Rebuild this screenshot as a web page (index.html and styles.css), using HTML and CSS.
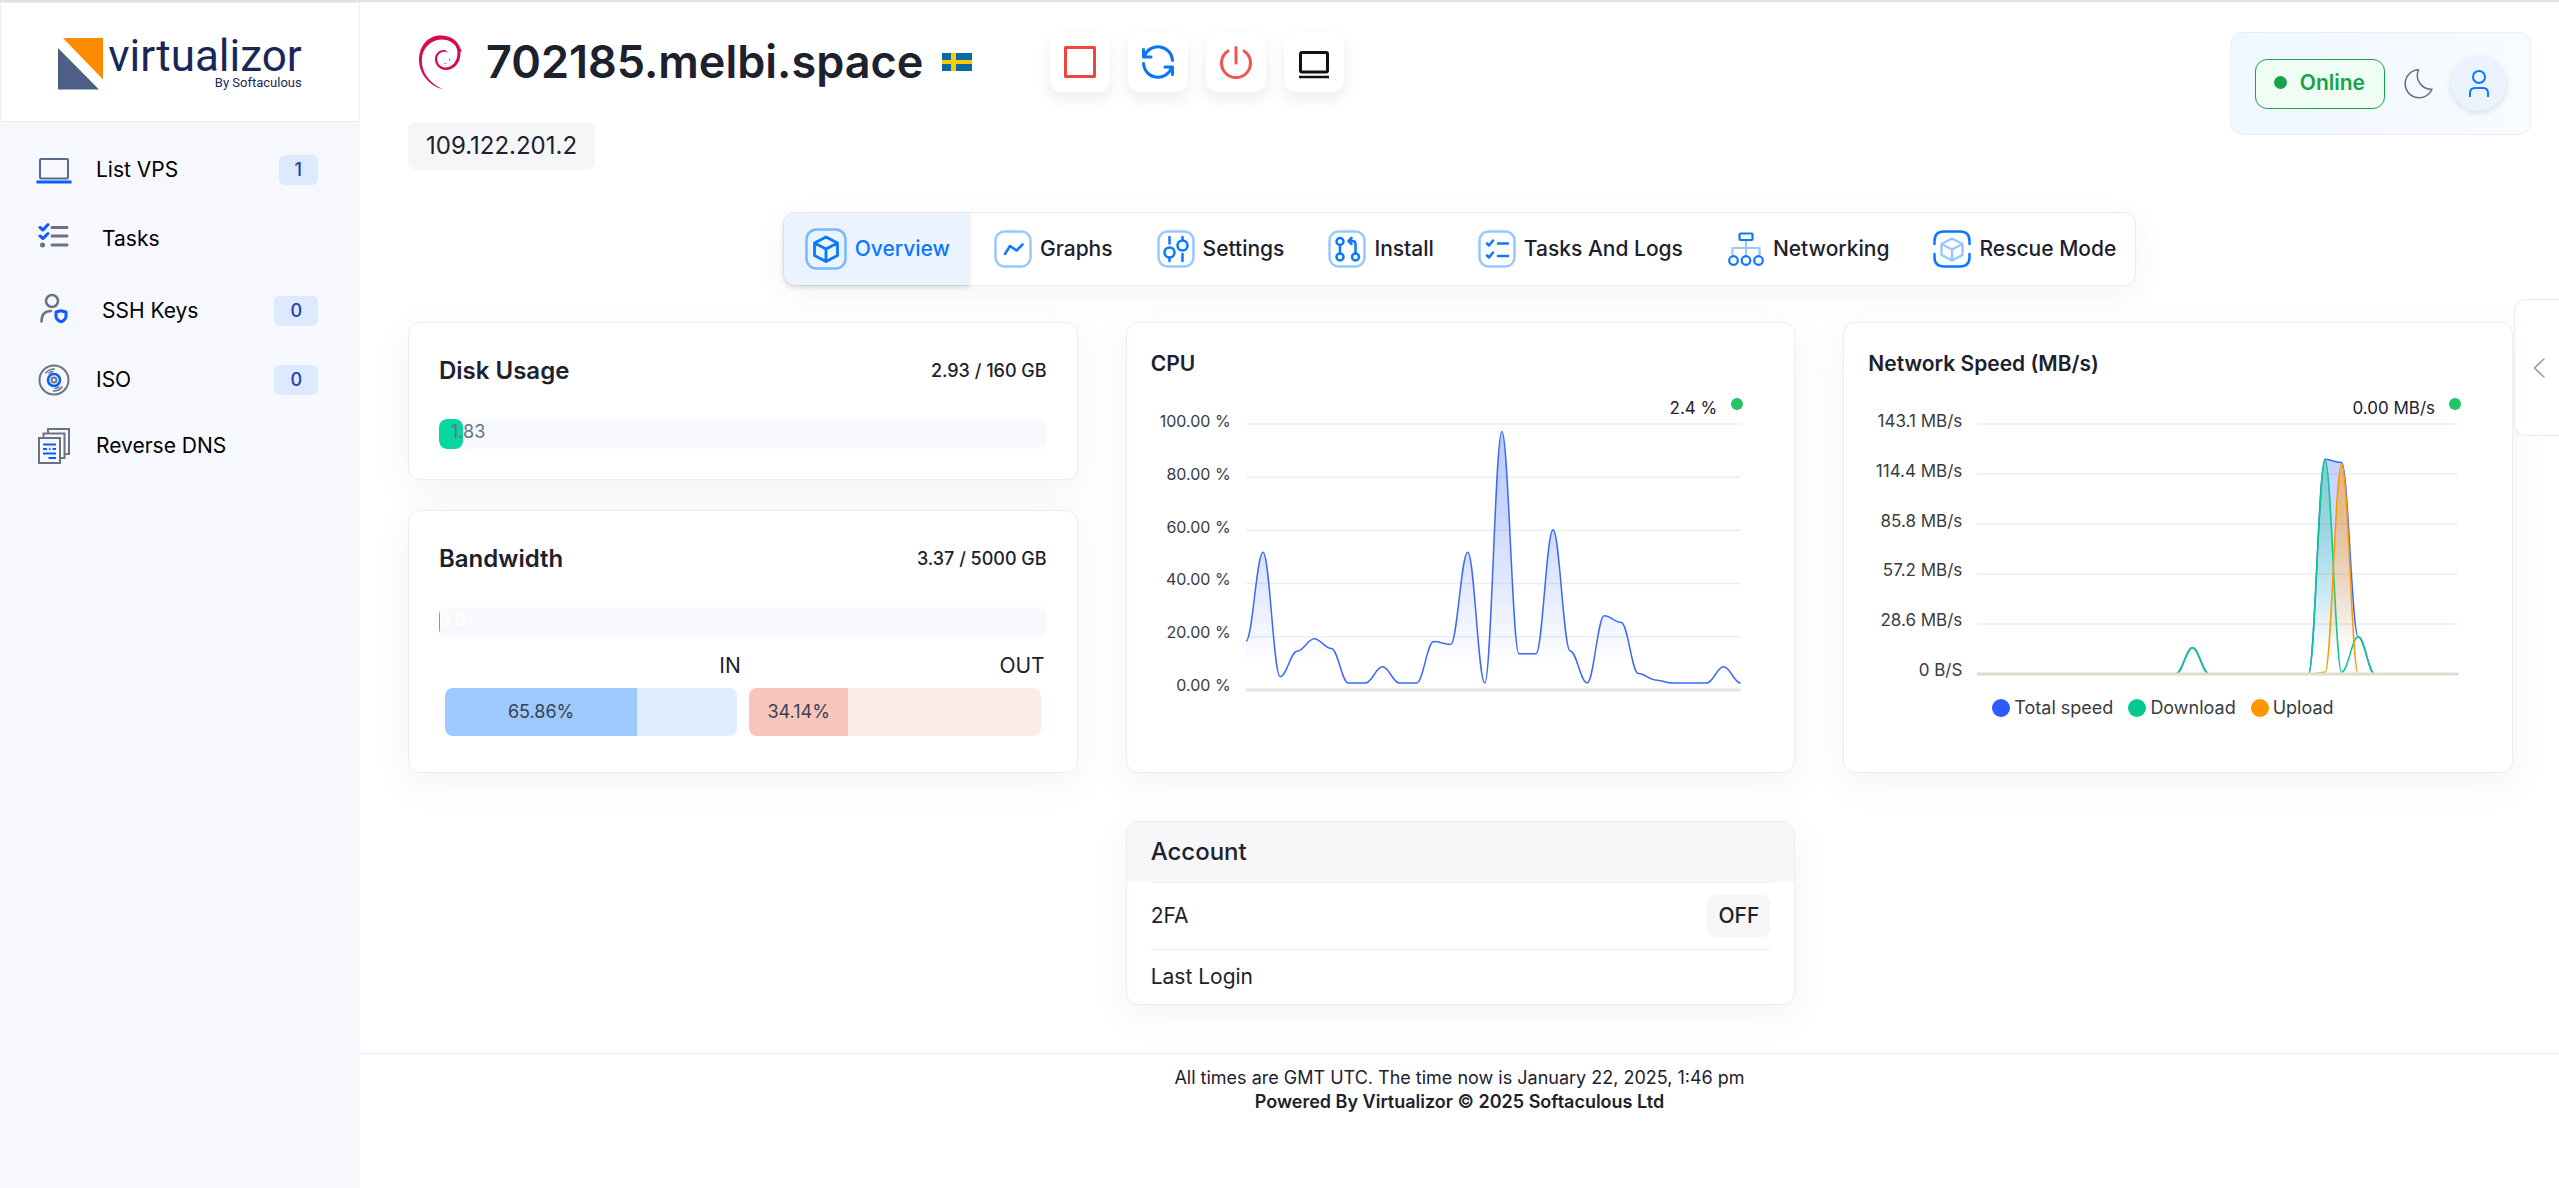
FILE: index.html
```html
<!DOCTYPE html>
<html lang="en">
<head>
  <meta charset="UTF-8">
  <title>Virtualizor - 702185.melbi.space</title>
  <link rel="stylesheet" href="styles.css">
</head>
<body>
  <div class="page">
    <aside class="sidebar">
      <a href="#" class="logo">
        <svg width="46" height="52" viewBox="0 0 46 52">
          <path d="M5 0H45V41.500Z" fill="#fd8b00"/>
          <path d="M0 10V51.500H41Z" fill="#4d5f84"/>
        </svg>
        <span class="logo-text">
          <span class="logo-name">virtualizor</span>
          <span class="logo-by">By Softaculous</span>
        </span>
      </a>
      <nav class="menu">
        <a href="#">
          <svg width="36" height="36" viewBox="0 0 36 36" fill="none">
            <rect x="4" y="7" width="28" height="19.500" rx="1" stroke="#5a6990" stroke-width="2"/>
            <path d="M.5 30H35.500" stroke="#0a5cff" stroke-width="3"/>
          </svg>
          <span>List VPS</span>
          <span class="badge">1</span>
        </a>
        <a href="#" class="wide">
          <svg width="36" height="38" viewBox="0 0 36 38" fill="none" stroke-width="3" stroke-linecap="round" stroke-linejoin="round">
            <path d="M16 7.500H31M16 16H31M16 25H31" stroke="#6b7286"/>
            <path d="M4 7.500L7 10L12 4.500M4 16L7 18.500L12 13.500" stroke="#0a5cff"/>
            <circle cx="6.500" cy="25" r="2.500" fill="#6b7286"/>
          </svg>
          <span>Tasks</span>
        </a>
        <a href="#" class="wide">
          <svg width="36" height="42" viewBox="0 0 36 42" fill="none" stroke-width="2.500" stroke-linecap="round" stroke-linejoin="round">
            <circle cx="16" cy="11" r="6" stroke="#6b7286"/>
            <path d="M5.500 31.500C5.500 24.500 9 21 15 21" stroke="#6b7286"/>
            <path d="M25 20.700L30 22V26C30 29.500 28 30.800 25 31.800C22 30.800 20 29.500 20 26V22Z" stroke="#0a5cff" stroke-width="3"/>
          </svg>
          <span>SSH Keys</span>
          <span class="badge">0</span>
        </a>
        <a href="#">
          <svg width="36" height="32" viewBox="0 0 36 32" fill="none" stroke="#6b7286" stroke-width="2">
            <circle cx="18" cy="16" r="14.500"/>
            <circle cx="18" cy="16" r="6" stroke="#0a5cff" stroke-width="2.500"/>
            <circle cx="18" cy="16" r="2.500"/>
            <path d="M9.500 9.500Q12.500 5 19 5M12.500 9.500Q14.500 7.500 17.500 7.500M26.500 22.500Q23.500 27 17 27M23.500 22.500Q21.500 24.500 18.500 24.500" stroke-width="1.500"/>
          </svg>
          <span>ISO</span>
          <span class="badge">0</span>
        </a>
        <a href="#">
          <svg width="36" height="36" viewBox="0 0 36 36" fill="none" stroke="#6b7286" stroke-width="2">
            <path d="M12 5V1H33V26H29.500M7.500 9.500V5.500H28.500V30H25"/>
            <rect x="3" y="10" width="21" height="25"/>
            <path d="M7 16.500H20M7 21H11M13 21H14.500M16.500 21H20M7 25.500H20M12.500 30H20" stroke="#0a5cff"/>
          </svg>
          <span>Reverse DNS</span>
        </a>
      </nav>
    </aside>

    <main class="main">
      <header class="header">
        <div>
          <div class="title-row">
            <svg class="os" width="44" height="56" viewBox="0 0 44 56" fill="#d70751">
              <path d="M25 55.500C9 51 1 38 1 26C1 11 11 1.500 22 1.500C33 1.500 42.500 7 42.500 19C42.500 29 36 36 28 36C21 36 16.500 30 17 24.500C17.500 18.500 22 15.500 27 16L31 19C26 16 19.500 18.500 19.200 24.500C19 30 23.500 34 28 33.500C35.500 33 39.500 26 39.500 19C39.500 10 32 5.500 23 5.500C13 6 4 14 3.800 26C3.600 38 11 49 25 55.500Z"/>
              <path d="M41 11L43.500 17L42 18ZM26 29L29 29.500L27 30ZM31 26L32 24L32 27Z"/>
            </svg>
            <h1>702185.melbi.space</h1>
            <svg class="flag" width="30" height="18" viewBox="0 0 30 18">
              <rect width="30" height="18" fill="#0a6aa8"/>
              <path d="M9 0H14V7H30V11H14V18H9V11H0V7H9Z" fill="#fecb00"/>
            </svg>
            <div class="actions">
              <button type="button" aria-label="Stop">
                <svg width="34" height="34" viewBox="0 0 34 34" fill="none" stroke="#f04443" stroke-width="3" stroke-linejoin="round">
                  <rect x="2.500" y="2.500" width="29" height="29"/>
                </svg>
              </button>
              <button type="button" aria-label="Restart">
                <svg width="34" height="34" viewBox="0 0 34 34" fill="none" stroke="#0a75f5" stroke-width="3" stroke-linecap="round" stroke-linejoin="round">
                  <path d="M31.500 15.500A14.500 14.500 0 0 0 3.500 11M2.500 4.500V12H10M2.500 18.500A14.500 14.500 0 0 0 30.500 23M31.500 29.500V22H24"/>
                </svg>
              </button>
              <button type="button" aria-label="Power off">
                <svg width="34" height="34" viewBox="0 0 34 34" fill="none" stroke="#ef5552" stroke-width="3" stroke-linecap="round">
                  <path d="M17 2.500V18M9 6A14.500 14.500 0 1 0 25 6"/>
                </svg>
              </button>
              <button type="button" aria-label="Console">
                <svg width="34" height="34" viewBox="0 0 34 34" fill="none" stroke="#111" stroke-width="3">
                  <rect x="3.500" y="7.500" width="27" height="19.500" rx="1.500"/>
                  <path d="M2 32H32" stroke-width="2.500"/>
                </svg>
              </button>
            </div>
          </div>
          <span class="ip">109.122.201.2</span>
        </div>
        <div class="user-box">
          <button type="button" class="online"><i></i>Online</button>
          <button type="button" class="moon" aria-label="Dark mode">
            <svg width="32" height="32" viewBox="0 0 32 32" fill="none" stroke="#6b7088" stroke-width="1.500" stroke-linejoin="round">
              <path d="M16.500 1.800A14 14 0 1 0 30 21.300A14 14 0 0 1 16.500 1.800Z"/>
            </svg>
          </button>
          <button type="button" class="user" aria-label="Account">
            <svg width="28" height="28" viewBox="0 0 28 28" fill="none" stroke="#0a78ff" stroke-width="2">
              <circle cx="14" cy="7" r="6"/>
              <path d="M5 27V23Q5 18 10 18H18Q23 18 23 23V27"/>
            </svg>
          </button>
        </div>
      </header>

      <nav class="tabs">
        <a href="#" class="active">
          <svg width="42" height="42" viewBox="0 0 42 42" fill="none" stroke="#0a78ff" stroke-linejoin="round">
            <rect x="1.500" y="1.500" width="39" height="39" rx="10" stroke="#7bb8ff" stroke-width="2.500"/>
            <path d="M21 9L32.500 15V27.500L21 33.500L9.500 27.500V15ZM9.500 15L21 21L32.500 15M21 21V33.500" stroke-width="2.800"/>
          </svg>
          Overview
        </a>
        <a href="#">
          <svg width="38" height="38" viewBox="0 0 38 38" fill="none">
            <rect x="1.500" y="1.500" width="35" height="35" rx="9" stroke="#99c8ff" stroke-width="2.500"/>
            <path d="M11 24L16 16L22.500 20.500L28.500 14.500" stroke="#0a78ff" stroke-width="2.500" stroke-linecap="round" stroke-linejoin="round"/>
          </svg>
          Graphs
        </a>
        <a href="#">
          <svg width="38" height="38" viewBox="0 0 38 38" fill="none">
            <rect x="1.500" y="1.500" width="35" height="35" rx="9" stroke="#99c8ff" stroke-width="2.500"/>
            <g stroke="#0a78ff" stroke-width="2.500" stroke-linecap="round">
              <path d="M12.500 7V13.500M12.500 28V31M25.500 7V10M25.500 24V31"/>
              <circle cx="12.500" cy="22.500" r="5"/><circle cx="25.500" cy="15.500" r="5"/>
            </g>
          </svg>
          Settings
        </a>
        <a href="#">
          <svg width="38" height="38" viewBox="0 0 38 38" fill="none">
            <rect x="1.500" y="1.500" width="35" height="35" rx="9" stroke="#99c8ff" stroke-width="2.500"/>
            <g stroke="#0a78ff" stroke-width="2.500" stroke-linecap="round" stroke-linejoin="round">
              <circle cx="12" cy="11.500" r="3.500"/><circle cx="12" cy="27" r="3.500"/><circle cx="27.500" cy="27" r="3.500"/>
              <path d="M12 15V23.500M27.500 23.500V14Q27.500 11 24.500 11H21.500M23.500 8L20.500 11L23.500 14"/>
            </g>
          </svg>
          Install
        </a>
        <a href="#">
          <svg width="38" height="38" viewBox="0 0 38 38" fill="none">
            <rect x="1.500" y="1.500" width="35" height="35" rx="9" stroke="#99c8ff" stroke-width="2.500"/>
            <path d="M9 13.500L11 15.500L15 10.500M20 13.500H30M9 25.500L11 27.500L15 22.500M20 26H30" stroke="#0a78ff" stroke-width="2.500" stroke-linecap="round" stroke-linejoin="round"/>
          </svg>
          Tasks And Logs
        </a>
        <a href="#">
          <svg width="38" height="38" viewBox="0 0 38 38" fill="none" stroke-width="2.200">
            <path d="M19 11V25M5.500 25V18H32.500V25" stroke="#99c8ff"/>
            <g stroke="#0a78ff">
              <rect x="12.500" y="3.500" width="13" height="6.500" rx="1"/>
              <circle cx="6.500" cy="30.500" r="4.300"/><circle cx="19" cy="30.500" r="4.300"/><circle cx="31.500" cy="30.500" r="4.300"/>
            </g>
          </svg>
          Networking
        </a>
        <a href="#">
          <svg width="38" height="38" viewBox="0 0 38 38" fill="none" stroke-linejoin="round">
            <path d="M1.500 14V11Q1.500 1.500 11 1.500H27Q36.500 1.500 36.500 11V14M1.500 24V27Q1.500 36.500 11 36.500H27Q36.500 36.500 36.500 27V24" stroke="#0a78ff" stroke-width="2.500" stroke-linecap="round"/>
            <path d="M19 8.500L29.500 14V25L19 30.500L8.500 25V14ZM8.500 14L19 19.500L29.500 14M19 19.500V30.500" stroke="#99c8ff" stroke-width="2.500"/>
          </svg>
          Rescue Mode
        </a>
      </nav>

      <div class="cards">
        <div class="column">
          <section class="card usage">
            <div class="usage-head">
              <h2>Disk Usage</h2>
              <span>2.93 / 160 GB</span>
            </div>
            <div class="bar"><div class="fill padded" style="width: 1.83%">1.83 %</div></div>
          </section>

          <section class="card usage bandwidth">
            <div class="usage-head">
              <h2>Bandwidth</h2>
              <span>3.37 / 5000 GB</span>
            </div>
            <div class="bar"><div class="fill" style="width: 0.07%">0.07 %</div></div>
            <div class="traffic">
              <div>
                <p>IN</p>
                <div class="traffic-bar in"><div style="width: 65.86%">65.86%</div></div>
              </div>
              <div>
                <p>OUT</p>
                <div class="traffic-bar out"><div style="width: 34.14%">34.14%</div></div>
              </div>
            </div>
          </section>
        </div>

        <section class="card graph">
          <h3>CPU</h3>
          <p class="current">2.4 %<i></i></p>
          <div class="plot">
            <ul class="labels">
              <li>100.00 %</li>
              <li>80.00 %</li>
              <li>60.00 %</li>
              <li>40.00 %</li>
              <li>20.00 %</li>
              <li>0.00 %</li>
            </ul>
            <svg id="cpu" viewBox="0 0 494 266" preserveAspectRatio="none"></svg>
          </div>
        </section>

        <section class="card graph network">
          <h3>Network Speed (MB/s)</h3>
          <p class="current">0.00 MB/s<i></i></p>
          <div class="plot">
            <ul class="labels">
              <li>143.1 MB/s</li>
              <li>114.4 MB/s</li>
              <li>85.8 MB/s</li>
              <li>57.2 MB/s</li>
              <li>28.6 MB/s</li>
              <li>0 B/S</li>
            </ul>
            <div>
              <svg id="network" viewBox="0 0 480 250" preserveAspectRatio="none"></svg>
              <ul class="legend">
                <li class="total">Total speed</li>
                <li class="download">Download</li>
                <li class="upload">Upload</li>
              </ul>
            </div>
          </div>
        </section>

        <section class="card account">
          <h2>Account</h2>
          <div class="account-row">2FA <button type="button">OFF</button></div>
          <div class="account-row">Last Login</div>
        </section>
      </div>

      <footer class="footer">
        <p>All times are GMT UTC. The time now is January 22, 2025, 1:46 pm</p>
        <p><strong>Powered By Virtualizor © 2025 Softaculous Ltd</strong></p>
      </footer>

      <button type="button" class="drawer" aria-label="Open panel">
        <svg width="12" height="20" viewBox="0 0 12 20" fill="none" stroke="#9497a6" stroke-width="1.500" stroke-linecap="round" stroke-linejoin="round">
          <path d="M11 1L1.500 10L11 19"/>
        </svg>
      </button>
    </main>
  </div>
  <script src="charts.js"></script>
</body>
</html>
```

FILE: styles.css
```css
* {
  box-sizing: border-box;
}

body {
  margin: 0;
  border-top: 2px solid #e0e0e0;
  font-family: Inter, "Open Sans", sans-serif;
  font-size: 21px;
  line-height: 30px;
  color: #1d212d;
  background: #fff;
}

h1, h2, h3, p, ul {
  margin: 0;
  padding: 0;
}

ul {
  list-style: none;
}

a {
  color: inherit;
  text-decoration: none;
}

button {
  padding: 0;
  border: 0;
  background: none;
  font: inherit;
  color: inherit;
  cursor: pointer;
}

svg {
  display: block;
  flex-shrink: 0;
}

.page {
  display: flex;
  min-height: calc(100vh - 2px);
}

/* sidebar */
.sidebar {
  flex: 0 0 360px;
  background: #f7f8fd;
}

.logo {
  display: flex;
  justify-content: center;
  align-items: center;
  gap: 4px;
  height: 120px;
  padding-top: 4px;
  background: #fff;
  border: 1px solid #eceef4;
  font-family: Roboto, sans-serif;
  color: #182758;
}

.logo-text {
  display: flex;
  flex-direction: column;
  align-items: flex-end;
}

.logo-name {
  font-size: 44px;
  line-height: 38px;
}

.logo-by {
  font-size: 13px;
  line-height: 16px;
}

.menu {
  padding: 14px 42px 0 36px;
  color: #000;
}

.menu a {
  display: flex;
  align-items: center;
  gap: 24px;
  padding: 16px 0;
}

.menu a.wide {
  gap: 30px;
}

.badge {
  margin: -4px 0 -4px auto;
  padding: 0 16px;
  border-radius: 6px;
  background: #dce9ff;
  color: #1e40af;
  font-size: 18px;
  font-weight: 500;
}

/* header */
.main {
  position: relative;
  flex: 1;
  min-width: 0;
}

.header {
  display: flex;
  justify-content: space-between;
  align-items: flex-start;
  padding: 30px 28px 0 48px;
}

.title-row {
  display: flex;
  align-items: center;
  height: 60px;
  padding-left: 10px;
}

.title-row h1 {
  margin-left: 24px;
  font-size: 45px;
  font-weight: 600;
  line-height: 60px;
}

.flag {
  margin-left: 19px;
}

.actions {
  display: flex;
  gap: 18px;
  margin-left: 78px;
}

.actions button {
  display: flex;
  align-items: center;
  justify-content: center;
  width: 60px;
  height: 60px;
  border-radius: 12px;
  background: #fff;
  box-shadow: 0 7px 14px rgba(70, 70, 150, 0.1);
}

.ip {
  display: inline-block;
  margin-top: 30px;
  padding: 0 18px;
  border-radius: 8px;
  background: #f5f6f8;
  font-size: 24px;
  line-height: 48px;
}

.user-box {
  display: flex;
  align-items: center;
  height: 103px;
  padding: 0 24px;
  border: 1px solid #e9eff6;
  border-radius: 12px;
  background: linear-gradient(90deg, #f0f7ff, #f8fbff);
}

.online {
  display: flex;
  align-items: center;
  gap: 13px;
  height: 50px;
  padding: 0 19px 2px 18px;
  border: 1px solid #16a34a;
  border-radius: 12px;
  background: #f0fdf4;
  color: #16a34a;
  font-weight: 600;
}

.online i {
  width: 13px;
  height: 13px;
  border-radius: 50%;
  background: #16a34a;
}

.moon {
  margin: 0 17px;
}

.user {
  display: flex;
  align-items: center;
  justify-content: center;
  width: 55px;
  height: 55px;
  border-radius: 50%;
  background: #ebf3ff;
  box-shadow: 0 2px 6px rgba(0, 0, 0, 0.12);
}

/* tabs */
.tabs {
  display: flex;
  width: max-content;
  margin: 42px auto 36px;
  border: 1px solid #e9ebf2;
  border-radius: 12px;
  background: #fff;
  box-shadow: 0 8px 30px rgba(60, 60, 110, 0.06);
  font-weight: 500;
}

.tabs a {
  display: flex;
  align-items: center;
  gap: 8px;
  height: 72px;
  padding: 0 19px 0 25px;
}

.tabs a.active {
  padding-left: 21px;
  border-radius: 11px 0 0 11px;
  background: #ebf3ff;
  color: #0a78ff;
  box-shadow: 0 2px 5px rgba(0, 0, 0, 0.14);
}

/* cards */
.cards {
  display: grid;
  grid-template-columns: repeat(3, minmax(0, 1fr));
  gap: 48px;
  padding: 0 46px 48px 48px;
}

.column {
  display: flex;
  flex-direction: column;
  gap: 30px;
}

.card {
  border: 1px solid #ebedf4;
  border-radius: 12px;
  background: #fff;
  box-shadow: 0 10px 36px rgba(60, 80, 140, 0.07);
}

.usage {
  padding: 30px;
}

.bandwidth {
  padding-bottom: 36px;
}

.usage-head {
  display: flex;
  justify-content: space-between;
  margin-bottom: 30px;
  font-size: 18px;
  font-weight: 500;
  line-height: 36px;
}

.usage-head h2 {
  font-size: 24px;
  font-weight: 600;
}

.bar {
  height: 30px;
  border-radius: 8px;
  background: #f8f9fc;
  overflow: hidden;
}

.fill {
  min-width: 1px;
  height: 30px;
  background: #06d6a0;
  border-radius: 8px;
  color: #fff;
  font-size: 18px;
  line-height: 25px;
}

.fill.padded {
  padding: 0 12px;
  color: #64748b;
}

.traffic {
  display: flex;
  margin-top: 14px;
}

.traffic > div {
  flex: 1;
}

.traffic p {
  padding-right: 2px;
  text-align: right;
}

.traffic-bar {
  margin: 7px 6px 0;
  border-radius: 8px;
  overflow: hidden;
  font-size: 18px;
  line-height: 48px;
  text-align: center;
  color: #374151;
}

.in {
  background: #e0edff;
}

.in div {
  background: #9dc9ff;
}

.out {
  background: #fcebe8;
}

.out div {
  background: #f9c6bd;
}

/* graphs */
.graph {
  padding: 26px 24px 20px;
}

.graph h3 {
  font-size: 21px;
  font-weight: 600;
}

.current {
  display: flex;
  justify-content: flex-end;
  gap: 14px;
  margin: 15px 27px 2px 0;
  font-size: 17px;
  line-height: 28px;
}

.current i {
  width: 12px;
  height: 12px;
  margin-top: 4px;
  border-radius: 50%;
  background: #22c55e;
}

.plot {
  display: grid;
  grid-template-columns: 80px minmax(0, 1fr);
  align-items: start;
  gap: 15px;
  padding-right: 30px;
}

.network .plot {
  grid-template-columns: 94px minmax(0, 1fr);
}

.labels {
  display: flex;
  flex-direction: column;
  justify-content: space-between;
  height: 284px;
  margin-top: -13px;
  color: #373d3f;
  font-size: 16px;
  line-height: 20px;
  text-align: right;
  white-space: nowrap;
}

.network .labels {
  height: 269px;
  font-size: 17px;
}

.plot svg {
  width: 100%;
  height: 266px;
  overflow: visible;
}

.network .plot svg {
  height: 250px;
}

.plot line,
.plot path {
  vector-effect: non-scaling-stroke;
}

.legend {
  display: flex;
  gap: 15px;
  margin: 20px 0 0 15px;
  color: #373d3f;
  font-size: 18px;
  line-height: 28px;
}

.legend li {
  display: flex;
  align-items: center;
  gap: 4px;
}

.legend li::before {
  content: "";
  width: 18px;
  height: 18px;
  border-radius: 50%;
  background: #2e5bff;
}

.legend .download::before {
  background: #06c893;
}

.legend .upload::before {
  background: #ff9800;
}

/* account */
.account {
  grid-column: 2;
  overflow: hidden;
}

.account h2 {
  padding: 0 24px;
  background: #f7f7fa;
  font-size: 24px;
  font-weight: 500;
  line-height: 60px;
}

.account-row {
  display: flex;
  justify-content: space-between;
  align-items: center;
  margin: 0 24px;
  padding: 12px 0;
  border-top: 1px solid #ebedf2;
}

.account-row button {
  padding: 6px 11px;
  border-radius: 8px;
  background: #f6f6f7;
  font-weight: 500;
}

/* footer */
.footer {
  padding-top: 12px;
  border-top: 1px solid #ebedf0;
  font-size: 18px;
  line-height: 24px;
  text-align: center;
}

.footer strong {
  font-weight: 600;
}

/* side drawer handle, sits over the page edge */
.drawer {
  position: absolute;
  top: 297px;
  right: 0;
  display: flex;
  align-items: center;
  width: 45px;
  height: 137px;
  padding-left: 18px;
  border: 1px solid #e9ebf2;
  border-right: 0;
  border-radius: 12px 0 0 12px;
  background: #fff;
}
```

FILE: charts.js
```js
const cpu = [18.3, 51.8, 5, 14.6, 19.3, 15.6, 2.6, 2.6, 8.7, 2.6, 2.6, 18.2, 17.1, 51.8, 2.6,
  97.2, 13.6, 13.6, 60.2, 14.7, 2.6, 27.9, 25.4, 6.2, 3.8, 2.6, 2.6, 2.6, 8.7, 2.6];

const total = new Array(30).fill(0);
const download = new Array(30).fill(0);
const upload = new Array(30).fill(0);
total[13] = download[13] = 15;
total[21] = 122.9;
total[22] = 121;
total[23] = download[23] = 21.3;
download[21] = 122.3;
download[22] = 1;
upload[21] = 1;
upload[22] = 120.2;

// smooth line through all the points
function linePath(data, max, width, height) {
  const step = width / (data.length - 1);
  const y = v => height - v / max * height;
  let d = `M0 ${y(data[0])}`;
  for (let i = 1; i < data.length; i++) {
    const x0 = (i - 1) * step;
    const x1 = i * step;
    d += `C${x0 + step * 0.38} ${y(data[i - 1])} ${x1 - step * 0.38} ${y(data[i])} ${x1} ${y(data[i])}`;
  }
  return d;
}

function drawChart(id, max, series, baseColor) {
  const svg = document.getElementById(id);
  const width = svg.viewBox.baseVal.width;
  const height = svg.viewBox.baseVal.height;
  let html = "";

  for (let i = 0; i < 5; i++) {
    const y = height / 5 * i;
    html += `<line x1="0" x2="${width}" y1="${y}" y2="${y}" stroke="#e9edf4" stroke-width="1.500"/>`;
  }

  series.forEach((s, n) => {
    const d = linePath(s.data, max, width, height);
    html += `<linearGradient id="${id}${n}" x1="0" y1="0" x2="0" y2="1">
      <stop offset="0" stop-color="${s.color}" stop-opacity="${s.opacity}"/>
      <stop offset="0.3" stop-color="${s.color}" stop-opacity="${s.opacity * 0.8}"/>
      <stop offset="0.9" stop-color="${s.color}" stop-opacity="0"/>
    </linearGradient>
    <path d="${d}V${height}H0Z" fill="url(#${id}${n})"/>
    <path d="${d}" fill="none" stroke="${s.color}" stroke-width="1.500"/>`;
  });

  html += `<line x1="0" x2="${width}" y1="${height}" y2="${height}" stroke="${baseColor}" stroke-width="3"/>`;
  svg.innerHTML = html;
}

drawChart("cpu", 100, [{ data: cpu, color: "#3d69f8", opacity: 0.35 }], "#e3e4e6");
drawChart("network", 143.1, [
  { data: total, color: "#3d69f8", opacity: 0.3 },
  { data: download, color: "#06c893", opacity: 0.35 },
  { data: upload, color: "#ff9800", opacity: 0.5 }
], "#dedccd");
```
